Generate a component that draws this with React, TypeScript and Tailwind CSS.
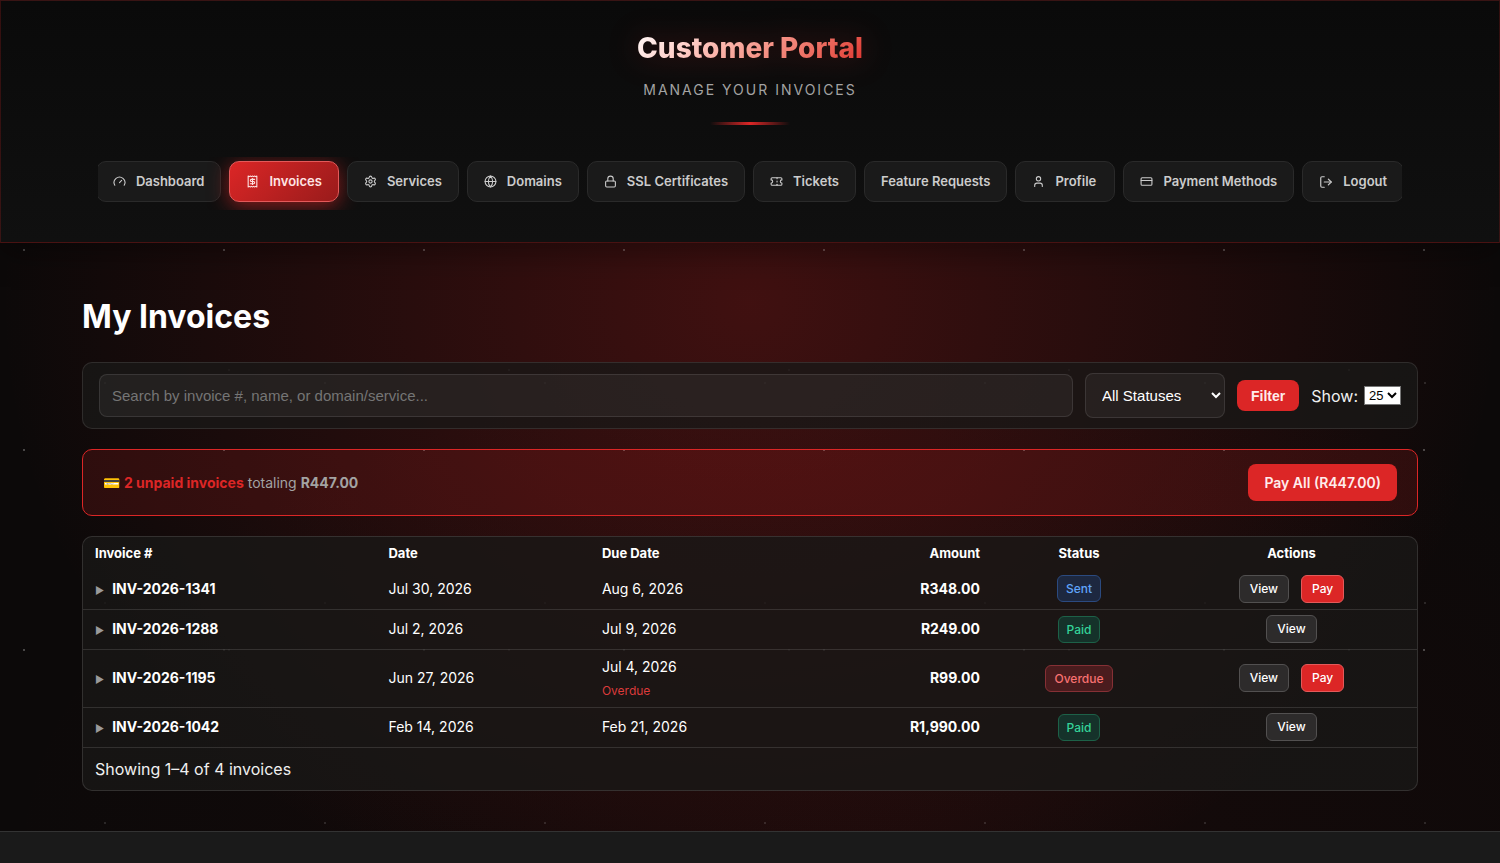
import { CreditCard, Gauge, Globe, Lock, LogOut, Receipt, Settings, Ticket, User } from 'lucide-react';
import type { LucideIcon } from 'lucide-react';

type NavItem = {
  label: string;
  icon?: LucideIcon;
  iconClass?: string;
  active?: boolean;
};

const navItems: NavItem[] = [
  { label: 'Dashboard', icon: Gauge },
  { label: 'Invoices', icon: Receipt, active: true },
  { label: 'Services', icon: Settings },
  { label: 'Domains', icon: Globe },
  { label: 'SSL Certificates', icon: Lock },
  { label: 'Tickets', icon: Ticket },
  { label: 'Feature Requests' },
  { label: 'Profile', icon: User },
  { label: 'Payment Methods', icon: CreditCard },
  { label: 'Logout', icon: LogOut, iconClass: 'size-[14px]' },
];

type Status = 'Sent' | 'Paid' | 'Overdue';

type Invoice = {
  number: string;
  date: string;
  due: string;
  amount: string;
  status: Status;
};

const invoices: Invoice[] = [
  { number: 'INV-2026-1341', date: 'Jul 30, 2026', due: 'Aug 6, 2026', amount: 'R348.00', status: 'Sent' },
  { number: 'INV-2026-1288', date: 'Jul 2, 2026', due: 'Jul 9, 2026', amount: 'R249.00', status: 'Paid' },
  { number: 'INV-2026-1195', date: 'Jun 27, 2026', due: 'Jul 4, 2026', amount: 'R99.00', status: 'Overdue' },
  { number: 'INV-2026-1042', date: 'Feb 14, 2026', due: 'Feb 21, 2026', amount: 'R1,990.00', status: 'Paid' },
];

const statusStyles: Record<Status, string> = {
  Sent: 'border-[#2b4a80] bg-[#1d2840] text-[#60a5fa]',
  Paid: 'border-[#1d6148] bg-[#15322a] text-[#34d399]',
  Overdue: 'border-[#863035] bg-[#4a1c1e] text-[#f87171]',
};

const Header: React.FC = () => (
  <header className="relative border border-[#dc2626]/20 border-b-[#dc2626]/30 bg-linear-to-b from-[#0a0a0a] to-[#101010] px-8 pt-6 pb-8 shadow-[0_8px_32px_rgba(0,0,0,0.4)]">
    <div className="flex flex-col items-center">
      <h1 className="bg-linear-135 from-white to-[#dc2626] bg-clip-text text-[28px] leading-[46px] font-extrabold text-transparent drop-shadow-[0_0_15px_rgba(220,38,38,0.3)]">
        Customer Portal
      </h1>
      <p className="mt-2 text-sm leading-[22px] tracking-[2px] text-[#a3a3a3] uppercase">Manage your invoices</p>
      <div className="mt-[21px] h-[3px] w-20 bg-linear-to-r from-transparent via-[#dc2626] to-transparent" />
    </div>
    <div className="mx-auto mt-8 max-w-[1336px] px-4">
      <nav className="flex justify-center gap-2 overflow-hidden pt-1 pb-2">
        {navItems.map((item) => (
          <a
            key={item.label}
            href="#"
            className={`flex min-w-[100px] shrink-0 items-center gap-[10px] rounded-[10px] border px-4 py-[9px] text-[13px] leading-[21px] font-semibold ${
              item.active
                ? 'border-[#e35a5a] bg-linear-135 from-[#dc2626] to-[#991b1b] text-[#ffe4e4] shadow-[0_4px_20px_rgba(220,38,38,0.6)]'
                : 'border-[#2a2a2a] bg-[#1a1a1a] text-[#cccccc]'
            }`}
          >
            {item.icon && <item.icon className={item.iconClass ?? 'size-[13px]'} />}
            {item.label}
          </a>
        ))}
      </nav>
    </div>
  </header>
);

const Filters: React.FC = () => (
  <form className="flex items-center gap-3 rounded-[10px] border border-white/10 bg-[#191817]/80 px-4 py-[10px]">
    <input
      type="text"
      aria-label="Search invoices"
      placeholder="Search by invoice #, name, or domain/service..."
      className="h-[43px] min-w-0 flex-1 rounded-lg border border-white/10 bg-white/5 px-3 font-['Liberation_Sans',sans-serif] text-[15px] text-white placeholder:text-[#757575]"
    />
    <select
      aria-label="Status"
      className="h-[45px] w-[140px] rounded-lg border border-white/10 bg-white/5 px-3 font-['Liberation_Sans',sans-serif] text-[15px] text-white"
    >
      <option>All Statuses</option>
    </select>
    <button
      type="button"
      className="h-[31px] rounded-lg bg-[#dc2626] px-[14px] font-['Liberation_Sans',sans-serif] text-sm font-bold text-[#ffecec]"
    >
      Filter
    </button>
    <label className="flex items-center gap-[6px] text-base text-[#f0f0f0]">
      Show:
      <select className="h-[19px] border border-[#767676] bg-white font-['Liberation_Sans',sans-serif] text-[13px] text-black">
        <option>25</option>
      </select>
    </label>
  </form>
);

const UnpaidBanner: React.FC = () => (
  <section className="mt-5 flex items-center justify-between rounded-[10px] border border-[#dc2626] bg-[#dc2626]/15 px-5 py-[14px]">
    <p className="text-sm text-[#a3a3a3]">
      💳 <strong className="font-bold text-[#dc2626]">2 unpaid invoices</strong> totaling{' '}
      <strong className="font-bold">R447.00</strong>
    </p>
    <button type="button" className="h-[37px] rounded-lg bg-[#dc2626] px-4 text-sm font-semibold text-[#ffecec]">
      Pay All (R447.00)
    </button>
  </section>
);

const InvoiceRow: React.FC<{ invoice: Invoice }> = ({ invoice }) => (
  <tr className="h-10 border-b border-white/12">
    <td className="px-3">
      <span className="mr-2 text-[10px] text-[#9a9a9a]">▶</span>
      <span className="font-bold">{invoice.number}</span>
    </td>
    <td className="px-3">{invoice.date}</td>
    <td className="px-3 py-[7px]">
      {invoice.due}
      {invoice.status === 'Overdue' && <div className="pt-1 text-xs leading-[19px] text-[#dc3b3b]">Overdue</div>}
    </td>
    <td className="px-3 text-right font-bold">{invoice.amount}</td>
    <td className="px-3 text-center">
      <span className={`inline-block rounded-md border px-2 text-xs leading-[25px] font-medium ${statusStyles[invoice.status]}`}>
        {invoice.status}
      </span>
    </td>
    <td className="px-3">
      <div className="flex justify-center gap-3">
        <button type="button" className="h-7 rounded-md border border-[#525050] bg-[#2d2b2b] px-[10px] text-xs font-medium">
          View
        </button>
        {invoice.status !== 'Paid' && (
          <button type="button" className="h-7 rounded-md border border-[#e35a5a] bg-[#dc2626] px-[10px] text-xs font-medium">
            Pay
          </button>
        )}
      </div>
    </td>
  </tr>
);

const InvoiceTable: React.FC = () => (
  <section className="mt-5 overflow-hidden rounded-[10px] border border-white/12 bg-[#191817]/80">
    <table className="w-full table-fixed border-collapse text-left text-sm text-white">
      <thead>
        <tr className="h-8 text-[13px]">
          <th className="w-[22%] px-3">Invoice #</th>
          <th className="w-[16%] px-3">Date</th>
          <th className="px-3">Due Date</th>
          <th className="w-[188px] px-3 text-right">Amount</th>
          <th className="w-[174px] px-3 text-center">Status</th>
          <th className="w-[251px] px-3 text-center">Actions</th>
        </tr>
      </thead>
      <tbody>
        {invoices.map((invoice) => (
          <InvoiceRow key={invoice.number} invoice={invoice} />
        ))}
      </tbody>
    </table>
    <p className="px-3 py-2 text-base leading-[26px] text-[#f0f0f0]">Showing 1–4 of 4 invoices</p>
  </section>
);

// Page backdrop: three sparse dot grids over a red glow.
const dots =
  'bg-[radial-gradient(circle_at_24px_50px,rgba(255,255,255,0.25)_1px,transparent_1px),radial-gradient(circle_at_105px_163px,rgba(255,255,255,0.12)_1px,transparent_1px),radial-gradient(circle_at_229px_90px,rgba(255,255,255,0.15)_1px,transparent_1px)] bg-size-[200px_200px,220px_220px,280px_280px]';
const glow =
  'bg-[radial-gradient(ellipse_50%_75%_at_50%_35%,rgba(220,38,38,0.25),transparent),radial-gradient(ellipse_60%_60%_at_60%_100%,rgba(153,27,27,0.08),transparent)]';

const App: React.FC = () => {
  return (
    <div className={`min-h-screen bg-[#0c0909] font-[Inter,sans-serif] ${glow}`}>
      <div className={`flex min-h-screen flex-col ${dots}`}>
        <Header />
        <main className="mx-auto w-full max-w-[1400px] px-8 pt-12 pb-10">
          <h2 className="mb-5 text-[32px] leading-[51px] font-bold text-white">My Invoices</h2>
          <Filters />
          <UnpaidBanner />
          <InvoiceTable />
        </main>
        <footer className="min-h-8 flex-1 border-t border-[#333] bg-[#1a1a1a]" />
      </div>
    </div>
  );
};

export default App;
